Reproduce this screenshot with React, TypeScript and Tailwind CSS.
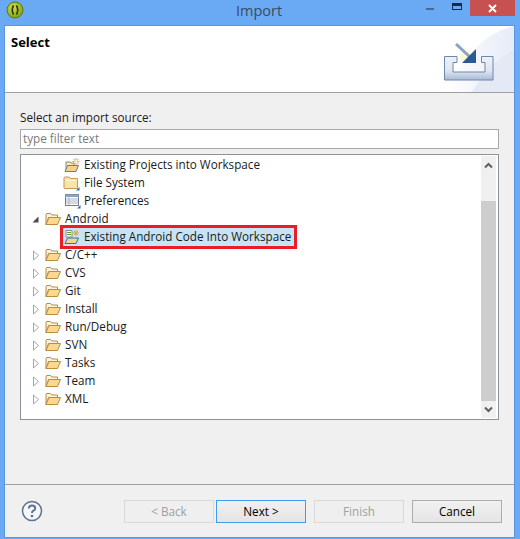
const font = "[font-family:'Open_Sans',sans-serif]"

function Chevron({ open }: { open?: boolean }) {
  if (open) {
    return (
      <svg width="9" height="9" viewBox="0 0 9 9" className="shrink-0">
        <path d="M7.5 1.5 V7.5 H1.5 Z" fill="#4a4a4a" />
      </svg>
    )
  }
  return (
    <svg width="9" height="11" viewBox="0 0 9 11" className="shrink-0">
      <path d="M2.5 1 L7.5 5.5 L2.5 10 Z" fill="#fff" stroke="#a6a6a6" />
    </svg>
  )
}

function Folder() {
  return (
    <svg width="16" height="14" viewBox="0 0 16 14" className="shrink-0">
      <path d="M1 12.5 V2.5 Q1 1.5 2 1.5 H5.5 L7 3 H12.5 V5.5 H3.5 Z" fill="#fdf3d4" stroke="#b98c42" />
      <path d="M1 12.5 L4 5.5 H15.5 L12.5 12.5 Z" fill="#fad88f" stroke="#b98c42" />
    </svg>
  )
}

function ClosedFolder() {
  return (
    <svg width="18" height="16" viewBox="0 0 18 16" className="-ml-[1px] shrink-0">
      <path d="M1 13 V3 Q1 2 2 2 H6 L7.5 3.5 H14.5 V13.5 H1.5 Z" fill="#fce3a6" stroke="#c29a50" />
      <path d="M2.5 5.5 H13.5" stroke="#fff6da" />
      <path d="M13 15.5 L16.5 15.5 L16.5 12 Z" fill="#2f6fb3" />
    </svg>
  )
}

function ProjectsIcon() {
  return (
    <svg width="16" height="16" viewBox="0 0 16 16" className="shrink-0">
      <path d="M2 14 L2 5 L6 5 L7 6 L10 6 L10 9" fill="#fce9b0" stroke="#8e8a7a" />
      <path d="M1 14.5 L3.5 8.5 H14.5 L12 14.5 Z" fill="#f6d184" stroke="#5f7fa8" />
      <path d="M12 1 V8 M8.5 4.5 H15.5 M9.5 2 L14.5 7 M14.5 2 L9.5 7" stroke="#d9a441" strokeWidth="1" />
      <circle cx="12" cy="4.5" r="1.5" fill="#fff7d0" />
    </svg>
  )
}

function PrefsIcon() {
  return (
    <svg width="18" height="16" viewBox="0 0 18 16" className="shrink-0">
      <rect x="1.5" y="1.5" width="13" height="11" fill="#fff" stroke="#6f7f96" />
      <path d="M1.5 1.5 H14.5 V4 H1.5 Z" fill="#8fa3bd" />
      <path d="M2 6 H14 M2 8 H14 M2 10 H14 M5 4 V12" stroke="#a9b7ca" />
      <path d="M13 15.5 L16.5 15.5 L16.5 12 Z" fill="#2f6fb3" />
    </svg>
  )
}

function AndroidCodeIcon() {
  return (
    <svg width="16" height="16" viewBox="0 0 16 16" className="shrink-0">
      <path d="M2 1.5 H8 V8 H2 Z" fill="#fff" stroke="#8c8c8c" />
      <path d="M3 3.5 H7 M3 5.5 H7" stroke="#5aa02c" />
      <path d="M1 14.5 L3.5 9 H14.5 L12 14.5 Z" fill="#f3d58f" stroke="#2f6fb3" />
      <path d="M12 1 V7 M9 4 H15 M10 2 L14 6 M14 2 L10 6" stroke="#d9a441" />
    </svg>
  )
}

function BannerArt() {
  return (
    <svg width="74" height="66" viewBox="0 0 74 66" className="shrink-0">
      <defs>
        <linearGradient id="swoosh" x1="0" y1="0" x2="1" y2="0">
          <stop offset="0" stopColor="#ffffff" />
          <stop offset="1" stopColor="#e6ebf6" />
        </linearGradient>
        <linearGradient id="tray" x1="0" y1="0" x2="0" y2="1">
          <stop offset="0" stopColor="#eef2f8" />
          <stop offset="0.6" stopColor="#dfe6f1" />
          <stop offset="1" stopColor="#a9bbd6" />
        </linearGradient>
      </defs>
      <path d="M74 0 Q34 8 6 66 H74 Z" fill="url(#swoosh)" />
      <path d="M74 24 Q50 36 32 66 H74 Z" fill="#e4e9f5" />
      <path d="M4.5 30.5 H17 V36.5 H13 V46 H45 V36.5 H41.5 V30.5 H53 V54 H4.5 Z" fill="url(#tray)" stroke="#6d88ad" />
      <circle cx="27" cy="31" r="7" fill="#fbf8dc" />
      <path d="M16 18 L30 31" stroke="#8aa2c4" strokeWidth="3" />
      <path d="M36 23 V37 H22 Z" fill="#2c5a96" />
    </svg>
  )
}

function Row({ label, icon, chevron, indent, selected }: { label: string; icon: React.ReactNode; chevron?: 'open' | 'closed'; indent?: boolean; selected?: boolean }) {
  return (
    <div className={`flex h-[18px] items-center ${indent ? 'pl-[41px]' : 'pl-[8px]'} ${selected ? 'ml-[40px] w-[231px] bg-[#c7e4f5] !pl-[1px]' : ''}`}>
      {!indent && (
        <div className="flex w-[14px] shrink-0 items-center justify-start">{chevron && <Chevron open={chevron === 'open'} />}</div>
      )}
      <div className="flex w-[20px] shrink-0 items-center">{icon}</div>
      <span className="whitespace-nowrap text-[11.7px] text-[#1a1a1a]">{label}</span>
    </div>
  )
}

function Button({ label, state }: { label: string; state?: 'disabled' | 'default' }) {
  const tone =
    state === 'disabled'
      ? 'border-[#d9d9d9] bg-[#efefef] text-[#a0a0a0]'
      : state === 'default'
        ? 'border-[#3c9cf0] bg-gradient-to-b from-[#f0f0f0] to-[#e5e5e5] text-black'
        : 'border-[#acacac] bg-gradient-to-b from-[#f0f0f0] to-[#e5e5e5] text-black'
  return <div className={`flex h-[23px] w-[90px] items-center justify-center border text-[11.7px] ${tone}`}>{label}</div>
}

export default function App() {
  return (
    <div className={`flex h-[539px] w-[520px] flex-col bg-[#6aaaf5] ${font}`}>
      {/* Title bar */}
      <div className="relative flex h-[25px] shrink-0 items-center justify-center">
        <svg width="18" height="18" viewBox="0 0 18 18" className="absolute left-[6px] top-[1px]">
          <defs>
            <radialGradient id="logo" cx="0.4" cy="0.35" r="0.7">
              <stop offset="0" stopColor="#cfe04a" />
              <stop offset="1" stopColor="#7f9e12" />
            </radialGradient>
          </defs>
          <circle cx="9" cy="9" r="8" fill="url(#logo)" stroke="#5c7a10" />
          <path d="M7.5 4.5 Q5 9 7.5 13.5 M10.5 4.5 Q13 9 10.5 13.5" fill="none" stroke="#27330a" strokeWidth="1.6" />
        </svg>
        <span className="-ml-[2px] -mt-[3px] text-[14.5px] text-[#3c4a5c]">Import</span>
        <div className="absolute left-[426px] top-[8px] h-[2px] w-[8px] bg-[#4a6a94]" />
        <div className="absolute left-[452px] top-[3px] h-[7px] w-[10px] border border-t-[3px] border-[#1d2a3a]" />
        <div className="absolute left-[470px] top-0 flex h-[16px] w-[45px] items-center justify-center bg-[#c75050]">
          <svg width="9" height="9" viewBox="0 0 9 9">
            <path d="M1 1 L8 8 M8 1 L1 8" stroke="#fff" strokeWidth="2" />
          </svg>
        </div>
      </div>

      {/* Window body */}
      <div className="mb-[1px] ml-[4px] mr-[5px] flex min-h-0 flex-1 flex-col border border-[#5a95dd] bg-[#f0f0f0]">
        <div className="flex h-[67px] shrink-0 justify-between border-b border-[#a0a0a0] bg-white pl-[6px]">
          <span className="mt-[6px] text-[13px] font-bold leading-[20px] text-black">Select</span>
          <BannerArt />
        </div>

        <div className="flex flex-col px-[15px]">
          <label className="mt-[15px] text-[11.7px] leading-[18px] text-[#1a1a1a]">Select an import source:</label>
          <div className="mt-[3px] flex h-[20px] items-center border border-[#a8a8a8] bg-white pl-[2px] text-[11.7px] text-[#7a7a7a]">type filter text</div>

          <div className="mt-[5px] flex h-[266px] border border-[#8a929c] bg-white pl-[2px]">
            <div className="flex-1 pt-[1px]">
              <Row label="Existing Projects into Workspace" icon={<ProjectsIcon />} indent />
              <Row label="File System" icon={<ClosedFolder />} indent />
              <Row label="Preferences" icon={<PrefsIcon />} indent />
              <Row label="Android" icon={<Folder />} chevron="open" />
              <div className="relative">
                <Row label="Existing Android Code Into Workspace" icon={<AndroidCodeIcon />} indent selected />
                <div className="absolute left-[37px] top-[-3px] h-[24px] w-[237px] border-[3px] border-[#ec1c24]" />
              </div>
              {['C/C++', 'CVS', 'Git', 'Install', 'Run/Debug', 'SVN', 'Tasks', 'Team', 'XML'].map((name) => (
                <Row key={name} label={name} icon={<Folder />} chevron="closed" />
              ))}
            </div>

            {/* Scrollbar */}
            <div className="my-[1px] mr-[2px] flex w-[15px] flex-col bg-[#f0f0f0]">
              <div className="flex h-[18px] items-center justify-center">
                <svg width="9" height="7" viewBox="0 0 9 7">
                  <path d="M1 5.5 L4.5 2 L8 5.5" fill="none" stroke="#606060" strokeWidth="2" />
                </svg>
              </div>
              <div className="mt-[27px] w-full flex-1 bg-[#cdcdcd]" />
              <div className="flex h-[17px] items-center justify-center">
                <svg width="9" height="7" viewBox="0 0 9 7">
                  <path d="M1 1.5 L4.5 5 L8 1.5" fill="none" stroke="#606060" strokeWidth="2" />
                </svg>
              </div>
            </div>
          </div>
        </div>

        <div className="mt-[64px] border-t border-[#a0a0a0]" />

        <div className="flex items-start pl-[16px] pr-[12px] pt-[15px]">
          <svg width="22" height="22" viewBox="0 0 22 22">
            <circle cx="11" cy="11" r="9.5" fill="#f4f6f9" stroke="#5f7290" strokeWidth="1.5" />
            <path d="M7.8 8.5 Q8 5.5 11 5.5 Q14.2 5.5 14.2 8.2 Q14.2 9.8 12.5 10.7 Q11 11.5 11 13" fill="none" stroke="#5f7290" strokeWidth="2" />
            <circle cx="11" cy="16" r="1.3" fill="#5f7290" />
          </svg>
          <div className="ml-auto flex">
            <Button label="< Back" state="disabled" />
            <div className="ml-[2px]">
              <Button label="Next >" state="default" />
            </div>
            <div className="ml-[8px]">
              <Button label="Finish" state="disabled" />
            </div>
            <div className="ml-[8px]">
              <Button label="Cancel" />
            </div>
          </div>
        </div>
      </div>
    </div>
  )
}
